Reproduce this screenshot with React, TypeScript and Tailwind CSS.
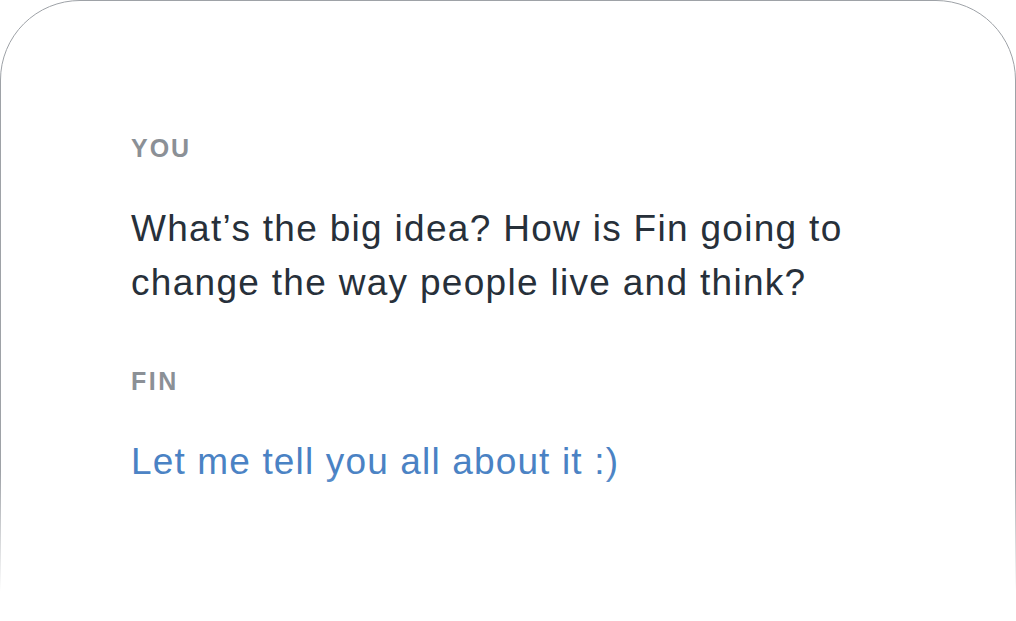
export default function App() {
  return (
    <div className="h-[621px] w-[1016px] overflow-hidden bg-white font-['Liberation_Sans',Arial,sans-serif]">
      <div className="relative h-[700px] rounded-t-[80px] border border-[#9ea2a7] bg-white">
        <div className="flex flex-col pl-[130px] pt-[135px]">
          <div className="text-[25px] font-bold leading-none tracking-[2px] text-[#8b9096]">YOU</div>
          <p className="mt-[41px] text-[37px] leading-[54px] tracking-[1.3px] text-[#27303a]">
            What’s the big idea? How is Fin going to
            <br />
            change the way people live and think?
          </p>
          <div className="mt-[59px] text-[25px] font-bold leading-none tracking-[2.5px] text-[#8b9096]">FIN</div>
          <p className="mt-[41px] text-[37px] leading-[54px] tracking-[1.15px] text-[#4a82c4]">Let me tell you all about it :)</p>
        </div>
        <div aria-hidden className="absolute inset-x-[-2px] top-[470px] h-[240px] bg-gradient-to-b from-white/0 via-white to-white" />
      </div>
    </div>
  );
}
